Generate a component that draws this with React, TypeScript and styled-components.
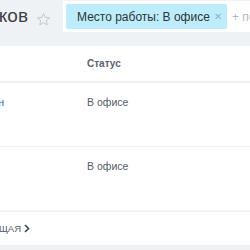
import React from 'react';
import styled, { createGlobalStyle } from 'styled-components';

const Global = createGlobalStyle`
  html, body { margin: 0; padding: 0; background: #fff; overflow: hidden; }
  body { font-family: "Liberation Sans", Arial, sans-serif; }
`;

const Page = styled.div`
  width: 250px;
  height: 250px;
  overflow: hidden;
  display: flex;
  flex-direction: column;
  background: #fff;
`;

const Header = styled.div`
  flex: none;
  height: 46px;
  box-sizing: border-box;
  padding-top: 1px;
  background: #eef2f4;
  display: flex;
  align-items: flex-start;
`;

const Clip = styled.div<{ $w: number }>`
  flex: none;
  width: ${(p) => p.$w}px;
  display: flex;
  justify-content: flex-end;
  overflow: hidden;
  white-space: nowrap;
`;

const Title = styled(Clip)`
  margin-top: 3px;
  font-size: 19px;
  line-height: 24px;
  color: #3c3f44;
`;

const Star = styled.svg`
  flex: none;
  margin: 11px 0 0 8px;
`;

const Search = styled.div`
  flex: 1;
  margin-left: 12px;
  height: 31px;
  background: #fff;
  display: flex;
  align-items: center;
  padding-left: 3px;
  white-space: nowrap;
  overflow: hidden;
`;

const Chip = styled.div`
  flex: none;
  height: 25px;
  width: 161px;
  box-sizing: border-box;
  background: #bcedfc;
  border-radius: 2px;
  display: flex;
  align-items: center;
  padding: 0 5px 0 11px;
  font-size: 12px;
  color: #333;
`;

const ChipText = styled.span`
  flex: 1;
`;

const ChipClose = styled.span`
  color: #a8adb4;
  font-size: 10px;
`;

const AddHint = styled.span`
  margin-left: 5px;
  font-size: 12px;
  color: #b5b9be;
`;

const Grid = styled.div<{ $h: number; $line: number; $lineColor: string }>`
  flex: none;
  height: ${(p) => p.$h}px;
  display: grid;
  grid-template-columns: 87px 1fr;
  border-bottom: ${(p) => p.$line}px solid ${(p) => p.$lineColor};
`;

const HeadCell = styled.div`
  align-self: center;
  font-size: 10px;
  font-weight: bold;
  color: #5a6370;
`;

const Cell = styled.div`
  padding-top: 13px;
  font-size: 10.5px;
  line-height: 13px;
  color: #535c69;
`;

const NameLink = styled(Clip)`
  padding-top: 13px;
  font-size: 10.5px;
  line-height: 13px;
  color: #2067b0;
`;

const Footer = styled.div`
  flex: none;
  height: 33px;
  display: flex;
  align-items: center;
`;

const Pager = styled(Clip)`
  font-size: 9.5px;
  color: #535c69;
`;

const Chevron = styled.svg`
  flex: none;
  margin-left: 3px;
`;

const Bottom = styled.div`
  flex: 1;
  background: #eef2f4;
`;

export default function App() {
  return (
    <>
      <Global />
      <Page>
        <Header>
          <Title $w={28}>Список сотрудников</Title>
          <Star width="15" height="15" viewBox="0 0 24 24">
            <path
              d="M12 2.5l2.9 6.2 6.6.7-5 4.5 1.4 6.6L12 17.2l-5.9 3.3 1.4-6.6-5-4.5 6.6-.7z"
              fill="none"
              stroke="#c2c7cc"
              strokeWidth="1.6"
              strokeLinejoin="round"
            />
          </Star>
          <Search>
            <Chip>
              <ChipText>Место работы: В офисе</ChipText>
              <ChipClose>✕</ChipClose>
            </Chip>
            <AddHint>+ поиск</AddHint>
          </Search>
        </Header>
        <Grid $h={35} $line={2} $lineColor="#eef2f4">
          <div />
          <HeadCell>Статус</HeadCell>
        </Grid>
        <Grid $h={63} $line={1} $lineColor="#eef0f1">
          <NameLink $w={4}>Смирнов Иван</NameLink>
          <Cell>В офисе</Cell>
        </Grid>
        <Grid $h={63} $line={2} $lineColor="#eef2f4">
          <div />
          <Cell>В офисе</Cell>
        </Grid>
        <Footer>
          <Pager $w={21}>СЛЕДУЮЩАЯ</Pager>
          <Chevron width="6" height="9" viewBox="0 0 6 9">
            <path d="M1 1l3.5 3.5L1 8" fill="none" stroke="#3b4450" strokeWidth="1.6" />
          </Chevron>
        </Footer>
        <Bottom />
      </Page>
    </>
  );
}
